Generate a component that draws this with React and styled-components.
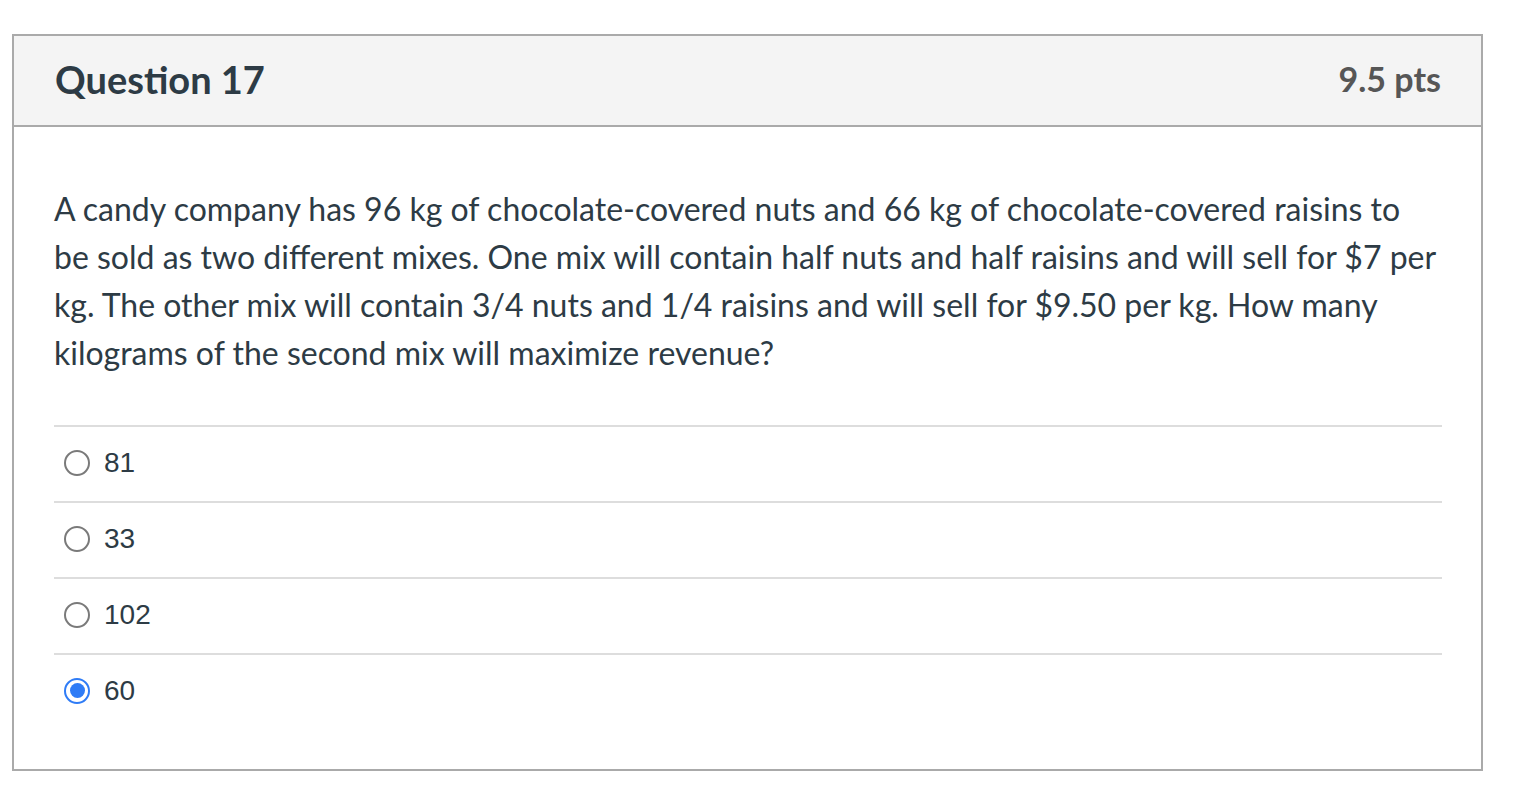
import React from 'react'
import styled, { createGlobalStyle } from 'styled-components'

const GlobalStyle = createGlobalStyle`
  body {
    margin: 0;
    background: #fff;
    font-family: Lato, "Noto Sans", sans-serif;
  }
`

const questionLines = [
  'A candy company has 96 kg of chocolate-covered nuts and 66 kg of chocolate-covered raisins to',
  'be sold as two different mixes. One mix will contain half nuts and half raisins and will sell for $7 per',
  'kg. The other mix will contain 3/4 nuts and 1/4 raisins and will sell for $9.50 per kg. How many',
  'kilograms of the second mix will maximize revenue?',
]

const answers = [
  { id: 'a1', label: '81' },
  { id: 'a2', label: '33' },
  { id: 'a3', label: '102' },
  { id: 'a4', label: '60', checked: true },
]

const App = () => {
  return <Page>
    <GlobalStyle />
    <Card>
      <Header>
        <Title>Question 17</Title>
        <Points>9.5 pts</Points>
      </Header>
      <Body>
        <QuestionText>
          {questionLines.map((line, i) => {
            return <Line key={i}>{line}</Line>
          })}
        </QuestionText>
        <Answers>
          {answers.map((a) => {
            return <Answer key={a.id}>
              <Radio checked={!!a.checked} />
              <AnswerLabel>{a.label}</AnswerLabel>
            </Answer>
          })}
        </Answers>
      </Body>
    </Card>
  </Page>
}

const Page = styled.div`
  padding: 34px 49px 28px 12px;
`

const Card = styled.div`
  border: 2px solid #aaaaaa;
  width: 1467px;
`

const Header = styled.div`
  display: flex;
  align-items: center;
  justify-content: space-between;
  height: 91px;
  padding: 0 40px 4px 41px;
  box-sizing: border-box;
  background: #f4f4f4;
  border-bottom: 2px solid #aaaaaa;
`

const Title = styled.h2`
  margin: 0;
  font-size: 38px;
  font-weight: 700;
  color: #2d3b45;
`

const Points = styled.div`
  font-size: 34px;
  font-weight: 700;
  color: #565656;
`

const Body = styled.div`
  padding: 58px 39px 40px 40px;
`

const QuestionText = styled.p`
  margin: 0 0 48px 0;
  font-size: 32px;
  line-height: 48px;
  color: #2d3b45;
`

const Line = styled.span`
  display: block;
  white-space: nowrap;
`

const Answers = styled.div`
  display: flex;
  flex-direction: column;
`

const Answer = styled.label`
  display: flex;
  align-items: center;
  gap: 14px;
  box-sizing: border-box;
  height: 76px;
  padding: 0 0 3px 10px;
  border-top: 2px solid #dddddd;
`

const Radio = styled.span`
  box-sizing: border-box;
  width: 26px;
  height: 26px;
  border-radius: 50%;
  border: 2px solid ${(p) => (p.checked ? '#2f7cf6' : '#7a7a7a')};
  display: flex;
  align-items: center;
  justify-content: center;
  &::after {
    content: '';
    display: ${(p) => (p.checked ? 'block' : 'none')};
    width: 15px;
    height: 15px;
    border-radius: 50%;
    background: #2f7cf6;
  }
`

const AnswerLabel = styled.span`
  font-family: "Liberation Sans", Arial, sans-serif;
  font-size: 28px;
  color: #2d3b45;
`

export default App
